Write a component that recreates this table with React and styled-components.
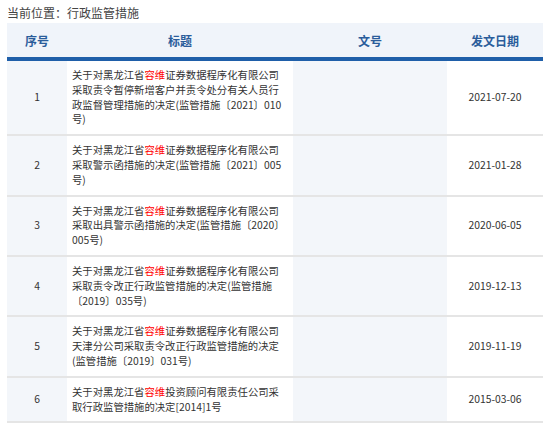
import React from "react";
import styled, { createGlobalStyle } from "styled-components";

const GlobalStyle = createGlobalStyle`
  body {
    margin: 0;
    background: #fff;
    font-family: "Noto Sans CJK SC", "Noto Sans", sans-serif;
    color: #333;
  }
`;

const Page = styled.div`
  padding: 0 7px;
  width: 536px;
`;

const Crumb = styled.div`
  padding-top: 3px;
  height: 20px;
  line-height: 20px;
  font-size: 12px;
  color: #444;
`;

const Table = styled.table`
  width: 536px;
  border-collapse: collapse;
  table-layout: fixed;
`;

const Head = styled.th`
  height: 34px;
  padding: 0;
  background: #f0f4fa;
  border-bottom: 4px solid #1f5fa9;
  color: #2b5d9b;
  font-size: 12px;
  font-weight: bold;
  text-align: center;
`;

const Cell = styled.td`
  padding: ${(p) => (p.$title ? "7px 6px 7px 5px" : "7px 0")};
  background: ${(p) => (p.$shade ? "#f3f6fa" : "#fff")};
  border-bottom: 2px solid #e5e5e5;
  font-size: 10.35px;
  line-height: 14.8px;
  text-align: ${(p) => (p.$title ? "left" : "center")};
  color: #333;
  vertical-align: middle;
`;

const Mark = styled.span`
  color: #f00;
`;

const rows = [
  {
    id: 1,
    after: "证券数据程序化有限公司采取责令暂停新增客户并责令处分有关人员行政监督管理措施的决定(监管措施〔2021〕010号)",
    date: "2021-07-20",
  },
  {
    id: 2,
    after: "证券数据程序化有限公司采取警示函措施的决定(监管措施〔2021〕005号)",
    date: "2021-01-28",
  },
  {
    id: 3,
    after: "证券数据程序化有限公司采取出具警示函措施的决定(监管措施〔2020〕005号)",
    date: "2020-06-05",
  },
  {
    id: 4,
    after: "证券数据程序化有限公司采取责令改正行政监管措施的决定(监管措施〔2019〕035号)",
    date: "2019-12-13",
  },
  {
    id: 5,
    after: "证券数据程序化有限公司天津分公司采取责令改正行政监管措施的决定(监管措施〔2019〕031号)",
    date: "2019-11-19",
  },
  {
    id: 6,
    after: "投资顾问有限责任公司采取行政监管措施的决定[2014]1号",
    date: "2015-03-06",
  },
];

export default function App() {
  return (
    <Page>
      <GlobalStyle />
      <Crumb>当前位置：行政监管措施</Crumb>
      <Table>
        <colgroup>
          <col style={{ width: 60 }} />
          <col style={{ width: 226 }} />
          <col style={{ width: 154 }} />
          <col style={{ width: 96 }} />
        </colgroup>
        <thead>
          <tr>
            <Head>序号</Head>
            <Head>标题</Head>
            <Head>文号</Head>
            <Head>发文日期</Head>
          </tr>
        </thead>
        <tbody>
          {rows.map((r) => (
            <tr key={r.id}>
              <Cell $shade>{r.id}</Cell>
              <Cell $title>
                关于对黑龙江省<Mark>容维</Mark>
                {r.after}
              </Cell>
              <Cell $shade />
              <Cell>{r.date}</Cell>
            </tr>
          ))}
        </tbody>
      </Table>
    </Page>
  );
}
